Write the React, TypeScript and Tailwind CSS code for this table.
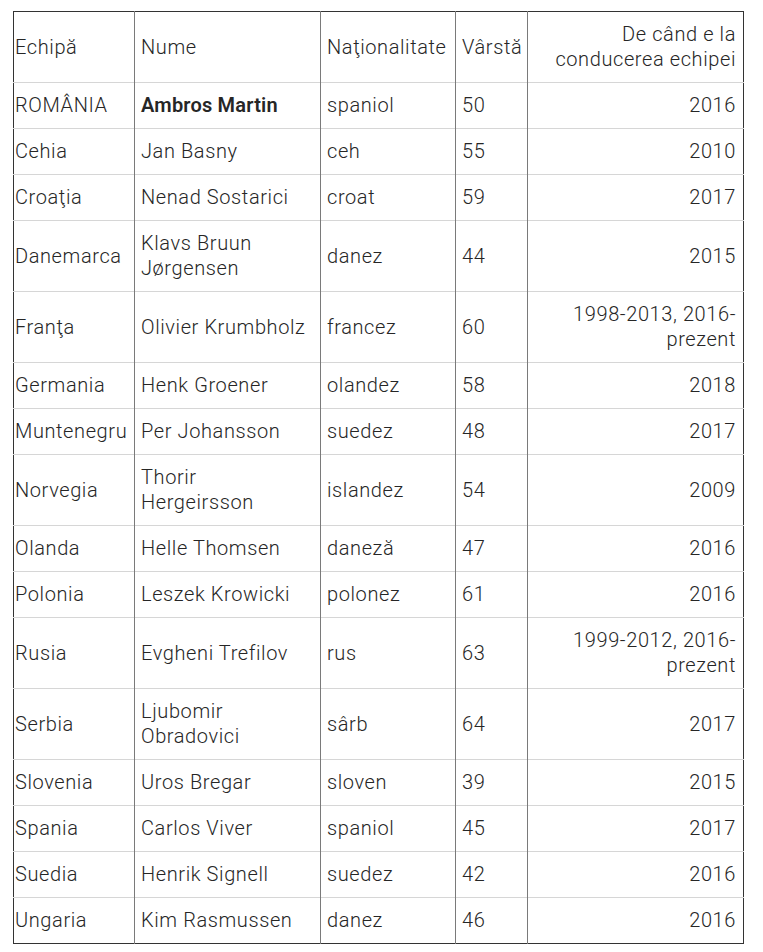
const rows: [string, React.ReactNode, string, string, React.ReactNode][] = [
  ['ROMÂNIA', <b className="font-semibold tracking-[0.2px]">Ambros Martin</b>, 'spaniol', '50', '2016'],
  ['Cehia', 'Jan Basny', 'ceh', '55', '2010'],
  ['Croaţia', 'Nenad Sostarici', 'croat', '59', '2017'],
  ['Danemarca', <>Klavs Bruun<br />Jørgensen</>, 'danez', '44', '2015'],
  ['Franţa', 'Olivier Krumbholz', 'francez', '60', <>1998-2013, 2016-<br />prezent</>],
  ['Germania', 'Henk Groener', 'olandez', '58', '2018'],
  ['Muntenegru', 'Per Johansson', 'suedez', '48', '2017'],
  ['Norvegia', <>Thorir<br />Hergeirsson</>, 'islandez', '54', '2009'],
  ['Olanda', 'Helle Thomsen', 'daneză', '47', '2016'],
  ['Polonia', 'Leszek Krowicki', 'polonez', '61', '2016'],
  ['Rusia', 'Evgheni Trefilov', 'rus', '63', <>1999-2012, 2016-<br />prezent</>],
  ['Serbia', <>Ljubomir<br />Obradovici</>, 'sârb', '64', '2017'],
  ['Slovenia', 'Uros Bregar', 'sloven', '39', '2015'],
  ['Spania', 'Carlos Viver', 'spaniol', '45', '2017'],
  ['Suedia', 'Henrik Signell', 'suedez', '42', '2016'],
  ['Ungaria', 'Kim Rasmussen', 'danez', '46', '2016'],
]

const cell = 'py-[10px] align-middle whitespace-nowrap font-light border-l border-l-[#7a7a7a] first:border-l-0'

export default function App() {
  return (
    <div className="min-h-[952px] w-[763px] bg-white pt-[11px] pl-[13px] font-['Roboto',sans-serif] text-[20px] leading-[25px] tracking-[0.6px] text-[#262626]">
      <table className="w-[730px] table-fixed border-collapse border border-[#333]">
        <colgroup>
          <col className="w-[121px]" />
          <col className="w-[186px]" />
          <col className="w-[135px]" />
          <col className="w-[72px]" />
          <col className="w-[216px]" />
        </colgroup>
        <thead>
          <tr className="h-[70px] border-b border-[#d6d6d6]">
            <th className={`${cell} pl-[1px] text-left`}>Echipă</th>
            <th className={`${cell} px-[6px] text-left`}>Nume</th>
            <th className={`${cell} px-[6px] text-left`}>Naţionalitate</th>
            <th className={`${cell} px-[6px] text-left`}>Vârstă</th>
            <th className={`${cell} px-[7px] text-right`}>De când e la<br />conducerea echipei</th>
          </tr>
        </thead>
        <tbody>
          {rows.map((r, i) => (
            <tr key={i} className="border-b border-[#d6d6d6] last:border-b-0">
              <td className={`${cell} pl-[1px]`}>{r[0]}</td>
              <td className={`${cell} px-[6px]`}>{r[1]}</td>
              <td className={`${cell} px-[6px]`}>{r[2]}</td>
              <td className={`${cell} px-[6px]`}>{r[3]}</td>
              <td className={`${cell} px-[7px] text-right`}>{r[4]}</td>
            </tr>
          ))}
        </tbody>
      </table>
    </div>
  )
}
